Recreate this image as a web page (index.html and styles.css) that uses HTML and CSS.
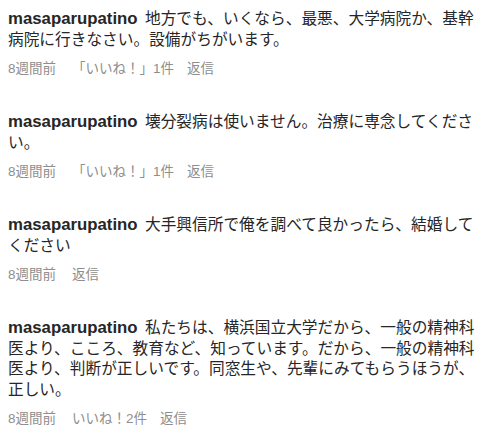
FILE: index.html
```html
<!DOCTYPE html>
<html lang="ja">
<head>
  <meta charset="UTF-8">
  <meta name="viewport" content="width=device-width, initial-scale=1.0">
  <title>コメント</title>
  <link rel="stylesheet" href="styles.css">
</head>
<body>
  <ul class="comments">
    <li class="comment">
      <p class="comment-text"><a href="#" class="user">masaparupatino</a> 地方でも、いくなら、最悪、大学病院か、基幹病院に行きなさい。設備がちがいます。</p>
      <div class="meta">
        <span class="time">8週間前</span>
        <a href="#">「いいね！」1件</a>
        <a href="#">返信</a>
      </div>
    </li>
    <li class="comment">
      <p class="comment-text"><a href="#" class="user">masaparupatino</a> 壊分裂病は使いません。治療に専念してください。</p>
      <div class="meta">
        <span class="time">8週間前</span>
        <a href="#">「いいね！」1件</a>
        <a href="#">返信</a>
      </div>
    </li>
    <li class="comment">
      <p class="comment-text"><a href="#" class="user">masaparupatino</a> 大手興信所で俺を調べて良かったら、結婚してください</p>
      <div class="meta">
        <span class="time">8週間前</span>
        <a href="#">返信</a>
      </div>
    </li>
    <li class="comment">
      <p class="comment-text"><a href="#" class="user">masaparupatino</a> 私たちは、横浜国立大学だから、一般の精神科医より、こころ、教育など、知っています。だから、一般の精神科医より、判断が正しいです。同窓生や、先輩にみてもらうほうが、正しい。</p>
      <div class="meta">
        <span class="time">8週間前</span>
        <a href="#">いいね！2件</a>
        <a href="#">返信</a>
      </div>
    </li>
  </ul>
</body>
</html>
```

FILE: styles.css
```css
/* General */
body {
  margin: 0;
  background-color: #fff;
  font-family: "Liberation Sans", "Noto Sans CJK JP", sans-serif;
  color: #262626;
}

ul {
  list-style: none;
  margin: 0;
  padding: 9px 14px 0 8px;
}

a {
  color: inherit;
  text-decoration: none;
}

/* Comment */
.comment {
  margin-bottom: 35px;
}

.comment:last-child {
  margin-bottom: 0;
}

.comment-text {
  margin: 0;
  font-size: 15.7px;
  line-height: 20.5px;
}

.user {
  font-weight: bold;
  font-size: 16.8px;
  margin-right: 3px;
}

/* Time, likes and reply */
.meta {
  display: flex;
  gap: 13px;
  margin-top: 10px;
  font-size: 13.5px;
  line-height: 17px;
  color: #8e8e8e;
}

.time {
  margin-right: 3px;
}
```
